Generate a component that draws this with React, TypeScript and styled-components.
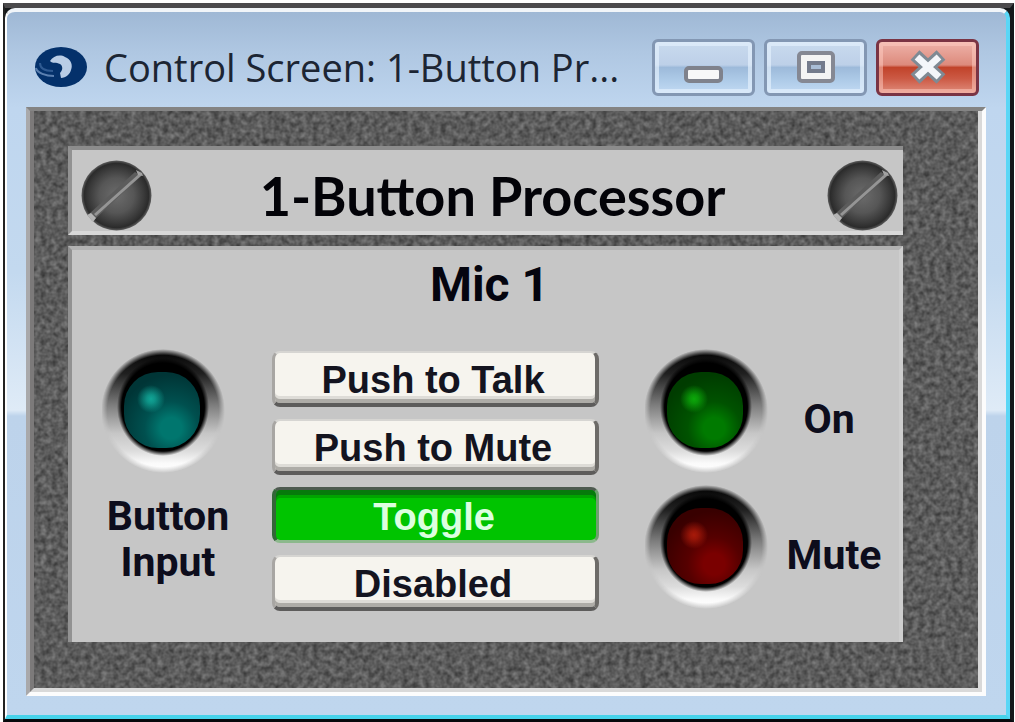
import React from "react";
import styled, { createGlobalStyle } from "styled-components";

const GlobalStyle = createGlobalStyle`
  *, *::before, *::after { box-sizing: border-box; }
  html, body { margin: 0; padding: 0; background: #ffffff; }
  body { font-family: "Liberation Sans", Arial, sans-serif; color: #0a0a12; }
  button { font: inherit; color: inherit; cursor: pointer; }
`;

const Page = styled.div`
  display: flex;
  min-height: 100vh;
  padding: 3px 1px 0 3px;
`;

const WindowEdge = styled.div`
  flex: 1;
  display: flex;
  min-width: 0;
  border-style: solid;
  border-width: 5px 4px 3px 2px;
  border-color: #4b4a4c #15181a #07090c #222222;
  background: #15181a;
`;

const WindowFrame = styled.main`
  flex: 1;
  display: flex;
  flex-direction: column;
  min-width: 0;
  border-style: solid;
  border-width: 4px 4px 4px 2px;
  border-color: #f1f5f9 #5ad6f6 #46d2ea #ffffff;
  border-radius: 10px 10px 0 0;
  background: linear-gradient(#9fb8d5 0, #afc7e2 40px, #bfd6ef 96px, #c3d9ef 260px, #dfebf7 398px, #bdd3eb 404px, #bfd6ee 100%);
  padding: 0 20px 19px 19px;
`;

const TitleBar = styled.header`
  display: flex;
  align-items: center;
  gap: 16px;
  height: 95px;
  padding: 15px 7px 0 8px;
`;

const WindowTitle = styled.h1`
  flex: 1;
  min-width: 0;
  margin: 0;
  font: 400 38px/56px "Open Sans", "Noto Sans", sans-serif;
  color: #1c2533;
  white-space: nowrap;
`;

const Controls = styled.div`
  display: flex;
  gap: 9px;
`;

const ControlButton = styled.button<{ $danger?: boolean }>`
  display: grid;
  place-items: center;
  width: 103px;
  height: 57px;
  padding: 0;
  border: 3px solid ${(p) => (p.$danger ? "#7a3444" : "#8397b3")};
  border-radius: 6px;
  background: ${(p) =>
    p.$danger
      ? "linear-gradient(#eeb3aa 0, #dd8a7c 45%, #c1432a 50%, #cc5a45 72%, #e08d7c 100%)"
      : "linear-gradient(#c9daee 0, #bdd0e8 45%, #9dbada 50%, #aecbe8 75%, #c2daf3 100%)"};
  box-shadow: inset 0 0 0 4px ${(p) => (p.$danger ? "rgba(255, 205, 195, 0.5)" : "rgba(226, 239, 252, 0.7)")};
`;

const Client = styled.section`
  position: relative;
  flex: 1;
  display: flex;
  flex-direction: column;
  border-style: solid;
  border-width: 4px;
  border-color: #848484 #fcfcfc #fcfcfc #a9a9ab;
  background: #5c5c5c;
`;

const Texture = styled.svg`
  position: absolute;
  inset: 0;
  width: 100%;
  height: 100%;
`;

const ClientInner = styled.div`
  position: relative;
  flex: 1;
  display: flex;
  flex-direction: column;
  gap: 11px;
  border-style: solid;
  border-width: 0 4px 4px 4px;
  border-color: #d9d9d9 #d9d9d9 #d9d9d9 #7c7a7a;
  padding: 35px 75px 46px 34px;
`;

const Plate = styled.div`
  border-left: 4px solid #929292;
  border-top: 4px solid #8c8c8c;
  background: #c6c6c6;
`;

const HeaderPlate = styled(Plate)`
  display: flex;
  align-items: center;
  justify-content: space-between;
  height: 89px;
  padding: 10px 5px 0 9px;
  border-bottom: 4px solid #d8d8d8;
`;

const PlateTitle = styled.h2`
  margin: 0;
  padding-left: 6px;
  font: 700 54px/70px Lato, sans-serif;
  color: #030308;
  white-space: nowrap;
`;

const ControlPlate = styled(Plate)`
  flex: 1;
  border-top-color: #b2b2b2;
  border-right: 4px solid #cecece;
`;

const ChannelName = styled.h3`
  margin: 0;
  padding-left: 8px;
  text-align: center;
  font: 700 48px/70px Roboto, sans-serif;
  color: #05050f;
`;

const Columns = styled.div`
  display: flex;
  justify-content: space-between;
  padding: 29px 0 0 30px;
`;

const InputColumn = styled.div`
  display: flex;
  flex-direction: column;
  gap: 20px;
  width: 124px;
`;

const Label = styled.span<{ $width: number }>`
  width: ${(p) => p.$width}px;
  text-align: center;
  font: 700 41px/46px Roboto, sans-serif;
  color: #0d0d1c;
`;

const ModeList = styled.div`
  display: flex;
  flex-direction: column;
  gap: 12px;
  width: 327px;
  padding-top: 2px;
`;

const ModeButton = styled.button<{ $active?: boolean }>`
  height: 56px;
  padding: 0 4px 2px 0;
  border: 0 solid;
  border-radius: 8px;
  font-size: 38px;
  font-weight: 700;
  line-height: 54px;
  color: ${(p) => (p.$active ? "#dcffe0" : "#14141f")};
  background: ${(p) => (p.$active ? "#00c400" : "#f6f4ee")};
  border-width: ${(p) => (p.$active ? "3px 3px 3px 4px" : "2px 4px 4px 3px")};
  border-color: ${(p) => (p.$active ? "#4d5a4f #6f9f70 #8cb98c #336638" : "#d6d5d2 #6d6b68 #5d5c5b #a8a6a3")};
  box-shadow: ${(p) => (p.$active ? "inset 0 5px 0 #067a0b, inset 0 8px 0 #00a400" : "inset 0 -4px 0 #aeaca7, inset 0 -7px 0 #dedcd7")};
`;

const StatusColumn = styled.div`
  display: flex;
  flex-direction: column;
  gap: 12px;
  width: 254px;
`;

const StatusRow = styled.div`
  display: flex;
  align-items: center;
  height: 124px;

  ${Label} {
    padding-top: 16px;
  }
`;

const LampArt = styled.svg`
  display: block;
  flex: none;
  width: 124px;
  height: 124px;
`;

const Mark = styled.svg`
  display: block;
  flex: none;
`;

type LampProps = { id: string; label: string; edge: string; body: string; glow: string; spot: string };

function Lamp({ id, label, edge, body, glow, spot }: LampProps) {
  return (
    <LampArt viewBox="0 0 124 124" role="img" aria-label={label}>
      <defs>
        <linearGradient id={`${id}-ring`} x1="0" y1="0" x2="0" y2="1">
          <stop offset="0" stopColor="#020202" />
          <stop offset=".2" stopColor="#202020" />
          <stop offset=".45" stopColor="#7c7c7c" />
          <stop offset=".68" stopColor="#c6c6c6" />
          <stop offset=".82" stopColor="#dcdcdc" />
          <stop offset=".92" stopColor="#fafafa" />
          <stop offset="1" stopColor="#ffffff" />
        </linearGradient>
        <radialGradient id={`${id}-fade`}>
          <stop offset=".9" stopColor="#fff" />
          <stop offset="1" stopColor="#000" />
        </radialGradient>
        <mask id={`${id}-mask`}>
          <circle cx="61" cy="62" r="62" fill={`url(#${id}-fade)`} />
        </mask>
        <radialGradient id={`${id}-well`}>
          <stop offset=".9" stopColor="#000" />
          <stop offset="1" stopColor="#000" stopOpacity="0" />
        </radialGradient>
        <radialGradient id={`${id}-body`} cx=".62" cy=".74" r=".7">
          <stop offset="0" stopColor={glow} />
          <stop offset=".2" stopColor={glow} />
          <stop offset=".5" stopColor={body} />
          <stop offset="1" stopColor={edge} />
        </radialGradient>
        <radialGradient id={`${id}-spot`}>
          <stop offset="0" stopColor={spot} />
          <stop offset=".3" stopColor={spot} stopOpacity=".8" />
          <stop offset="1" stopColor={spot} stopOpacity="0" />
        </radialGradient>
      </defs>
      <circle cx="61" cy="62" r="62" fill={`url(#${id}-ring)`} mask={`url(#${id}-mask)`} />
      <ellipse cx="61" cy="58" rx="46" ry="49" fill={`url(#${id}-well)`} />
      <rect x="22" y="23" width="76" height="76" rx="34" fill={`url(#${id}-body)`} />
      <circle cx="49" cy="50" r="14" fill={`url(#${id}-spot)`} />
    </LampArt>
  );
}

function Screw({ id }: { id: string }) {
  return (
    <Mark width="71" height="71" viewBox="0 0 71 71" aria-hidden="true">
      <defs>
        <radialGradient id={id}>
          <stop offset="0" stopColor="#6c6c6c" />
          <stop offset=".5" stopColor="#565656" />
          <stop offset=".8" stopColor="#383838" />
          <stop offset=".92" stopColor="#2b2b2b" />
          <stop offset="1" stopColor="#5f5f5f" />
        </radialGradient>
      </defs>
      <circle cx="35.500" cy="35.500" r="35" fill={`url(#${id})`} />
      <path d="M8 54 L54 12 L60 16 L14 59 Z" fill="#5c5c5c" />
      <path d="M14 55 L60 14" stroke="#959595" strokeWidth="3" />
      <path d="M6 55 L10 53 L15 58 L12 62 Z" fill="#b4b4b4" />
      <path d="M55 10 L61 13 L62 16 L57 15 Z" fill="#a2a2a2" />
    </Mark>
  );
}

const modes = ["Push to Talk", "Push to Mute", "Toggle", "Disabled"];

export default function App() {
  const [mode, setMode] = React.useState("Toggle");
  return (
    <Page>
      <GlobalStyle />
      <WindowEdge>
        <WindowFrame>
          <TitleBar>
            <Mark width="54" height="42" viewBox="0 0 54 42" aria-hidden="true">
              <ellipse cx="27" cy="21" rx="26" ry="20" fill="#04316b" />
              <path d="M16 15 C19 10 26 8 31 11 C37 13 39 19 37 24 C36 28 32 32 27 32 L26 27 C29 24 29 20 26 18 C22 16 19 18 16 15 Z" fill="#b9cde6" />
              <path d="M2 22 C3 27 12 30 20 30" stroke="#5c80b0" strokeWidth="2" fill="none" />
              <path d="M6 17 C6 23 12 25 19 25" stroke="#2f5a92" strokeWidth="2" fill="none" />
            </Mark>
            <WindowTitle>Control Screen: 1-Button Pr...</WindowTitle>
            <Controls>
              <ControlButton type="button" aria-label="Minimize">
                <Mark width="40" height="36" viewBox="0 0 40 36" aria-hidden="true">
                  <rect x="2" y="19" width="35" height="13" rx="3" fill="#f8f8f8" stroke="#7f828c" strokeWidth="4" />
                </Mark>
              </ControlButton>
              <ControlButton type="button" aria-label="Maximize">
                <Mark width="40" height="36" viewBox="0 0 40 36" aria-hidden="true">
                  <rect x="3" y="4" width="34" height="28" rx="3" fill="#f4f4f4" stroke="#858893" strokeWidth="4" />
                  <rect x="13" y="14" width="14" height="8" fill="#a9bdd6" stroke="#747b8c" strokeWidth="4" />
                </Mark>
              </ControlButton>
              <ControlButton type="button" aria-label="Close" $danger>
                <Mark width="40" height="36" viewBox="0 0 40 36" aria-hidden="true">
                  <path d="M7 6 L33 30 M33 6 L7 30" stroke="#7f8a94" strokeWidth="13" />
                  <path d="M9 8 L31 28 M31 8 L9 28" stroke="#f4f6fa" strokeWidth="7" />
                </Mark>
              </ControlButton>
            </Controls>
          </TitleBar>
          <Client>
            <Texture aria-hidden="true">
              <filter id="grain" x="0" y="0" width="100%" height="100%" colorInterpolationFilters="sRGB">
                <feTurbulence type="fractalNoise" baseFrequency="0.18" numOctaves="2" seed="4" />
                <feColorMatrix values="0.36 0 0 0 0.18  0.36 0 0 0 0.18  0.36 0 0 0 0.18  0 0 0 0 1" />
              </filter>
              <rect width="100%" height="100%" filter="url(#grain)" />
            </Texture>
            <ClientInner>
              <HeaderPlate>
                <Screw id="screw-left" />
                <PlateTitle>1-Button Processor</PlateTitle>
                <Screw id="screw-right" />
              </HeaderPlate>
              <ControlPlate>
                <ChannelName>Mic 1</ChannelName>
                <Columns>
                  <InputColumn>
                    <Lamp id="input" label="Button Input" edge="#003536" body="#00504f" glow="#00766e" spot="#11a596" />
                    <Label $width={132}>Button Input</Label>
                  </InputColumn>
                  <ModeList role="group" aria-label="Mode">
                    {modes.map((m) => (
                      <ModeButton key={m} type="button" $active={m === mode} aria-pressed={m === mode} onClick={() => setMode(m)}>
                        {m}
                      </ModeButton>
                    ))}
                  </ModeList>
                  <StatusColumn>
                    <StatusRow>
                      <Lamp id="on" label="On" edge="#003c00" body="#005200" glow="#007a00" spot="#0ca80a" />
                      <Label $width={120}>On</Label>
                    </StatusRow>
                    <StatusRow>
                      <Lamp id="mute" label="Mute" edge="#380000" body="#560000" glow="#7a0000" spot="#a81a0a" />
                      <Label $width={130}>Mute</Label>
                    </StatusRow>
                  </StatusColumn>
                </Columns>
              </ControlPlate>
            </ClientInner>
          </Client>
        </WindowFrame>
      </WindowEdge>
    </Page>
  );
}
